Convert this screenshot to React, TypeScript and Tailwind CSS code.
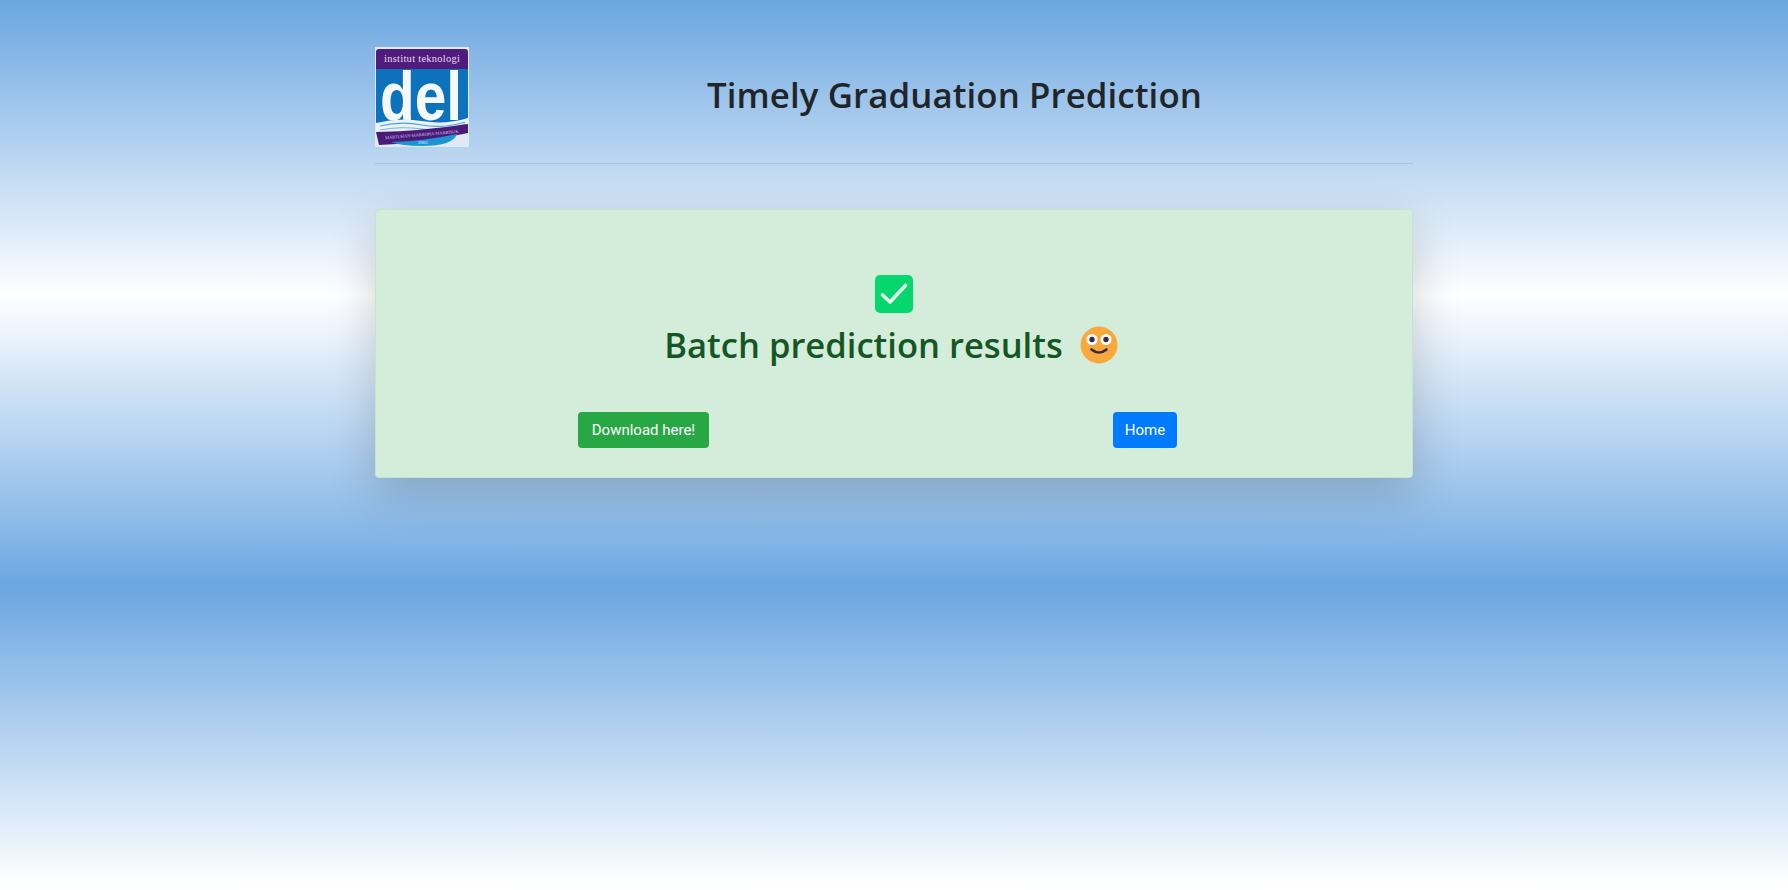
function DelLogo() {
  return (
    <svg width="94" height="100" viewBox="0 0 94 100" className="shrink-0">
      <rect width="94" height="100" fill="#dfeaf5" />
      <path d="M1 5 Q1 2 4 2 H90 Q93 2 93 5 V22 H1 Z" fill="#4f1b7c" />
      <text x="47" y="14.5" textAnchor="middle" fontFamily="'Liberation Serif', serif" fontSize="10.5" textLength="76" fill="#e6dcef">
        institut teknologi
      </text>
      <rect x="1" y="22" width="92" height="62" fill="#0c72bb" />
      <text x="5" y="73" textLength="82" lengthAdjust="spacingAndGlyphs" fontFamily="'Liberation Sans', sans-serif" fontSize="68" fontWeight="700" fill="#f4f9fd">
        del
      </text>
      <path d="M1 76 Q24 70 47 74 T93 71 V86 H1 Z" fill="#eaf3fa" />
      <path d="M5 79 Q26 74 47 78 T90 75" fill="none" stroke="#4fa2d8" strokeWidth="1.2" />
      <path d="M5 83 Q26 79 47 82 T90 77" fill="none" stroke="#4fa2d8" strokeWidth="0.8" />
      <path d="M1 85 Q47 84 93 77 V86 Q47 96 4 98 Z" fill="#4a1a78" />
      <text x="47" y="89" textAnchor="middle" transform="rotate(-5 47 89)" fontFamily="'Liberation Serif', serif" fontSize="4.4" fill="#d8cfe6">
        MARTUHAN-MARROHA-MARBISUK
      </text>
      <path d="M16 95 Q50 94 82 87 Q78 99 47 99 Q26 99 16 95 Z" fill="#1d95d5" />
      <text x="48" y="97" textAnchor="middle" fontFamily="'Liberation Serif', serif" fontSize="5" fill="#e6f3fb">
        2001
      </text>
    </svg>
  );
}

function CheckIcon() {
  return (
    <svg width="38" height="38" viewBox="0 0 38 38">
      <rect width="38" height="38" rx="5" fill="#06d66e" />
      <path d="M7.5 20 L15 27 L30.5 10.5" fill="none" stroke="#e3f9ec" strokeWidth="3.6" strokeLinecap="round" strokeLinejoin="round" />
    </svg>
  );
}

function SmileEmoji() {
  return (
    <svg width="38" height="38" viewBox="0 0 38 38" className="shrink-0">
      <circle cx="19" cy="19" r="18.5" fill="#f9a93c" />
      <circle cx="12" cy="13.5" r="5.5" fill="#ffffff" />
      <circle cx="26" cy="13.5" r="5.5" fill="#ffffff" />
      <circle cx="12" cy="13.5" r="2.7" fill="#3b2a3f" />
      <circle cx="26" cy="13.5" r="2.7" fill="#3b2a3f" />
      <path d="M11.5 23.5 Q19 29.5 26.5 23.5" fill="none" stroke="#3b2a3f" strokeWidth="2.6" strokeLinecap="round" />
    </svg>
  );
}

export default function App() {
  return (
    <div className="h-[890px] overflow-hidden bg-[linear-gradient(180deg,#6ba6e0_0px,#ffffff_295px,#6ba6e0_588px,#ffffff_885px)] font-['Open_Sans',sans-serif]">
      <div className="mx-auto w-[1038px] pt-[47px]">
        {/* Header */}
        <div className="flex items-center border-b border-[#a9c4e2] pb-[16px]">
          <DelLogo />
          <h1 className="ml-[238px] pb-[5px] text-[34.8px] leading-[48px] font-semibold text-[#212529] whitespace-nowrap tracking-[0.1px]">
            Timely Graduation Prediction
          </h1>
        </div>

        {/* Result card */}
        <div className="mt-[45px] h-[269px] rounded-[4px] border border-[#c3e6cb] bg-[#d4edda] pt-[65px] shadow-[0_16px_48px_rgba(0,0,0,0.18)]">
          <div className="flex justify-center">
            <CheckIcon />
          </div>
          <div className="mt-[8px] flex items-center justify-center gap-[17px] pr-[6px] text-[#155724]">
            <h2 className="text-[34.6px] leading-[48px] font-semibold whitespace-nowrap">Batch prediction results</h2>
            <SmileEmoji />
          </div>
          <div className="mt-[43px] grid grid-cols-2">
            <div className="flex justify-center pl-[17px]">
              <button className="h-[36px] rounded-[4px] bg-[#28a745] px-[13.5px] font-['Roboto',sans-serif] text-[15px] text-white">
                Download here!
              </button>
            </div>
            <div className="flex justify-center pr-[16px]">
              <button className="h-[36px] rounded-[4px] bg-[#007bff] px-[11.5px] font-['Roboto',sans-serif] text-[15px] text-white">
                Home
              </button>
            </div>
          </div>
        </div>
      </div>
    </div>
  );
}
